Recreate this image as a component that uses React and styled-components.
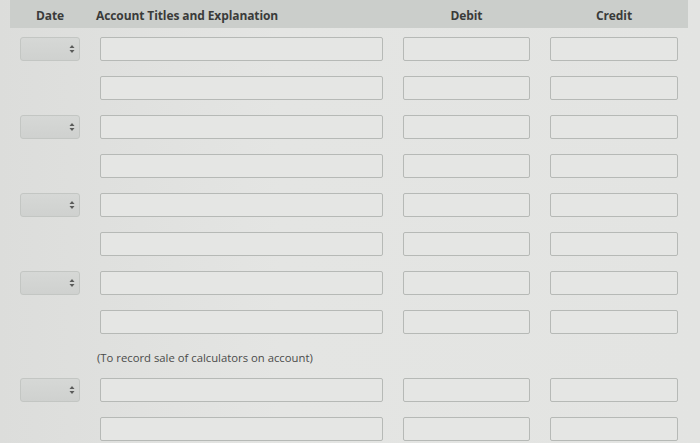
import React from 'react';
import styled, { createGlobalStyle } from 'styled-components';

const GlobalStyle = createGlobalStyle`
  html, body {
    margin: 0;
    padding: 0;
    background: #e1e2e0;
  }
  body {
    font-family: "Open Sans", "DejaVu Sans", sans-serif;
    color: #3b3c3b;
  }
`;

const Page = styled.div`
  width: 700px;
  height: 443px;
  overflow: hidden;
  background: linear-gradient(90deg, #dcdddb 0%, #e4e5e3 40%, #e3e4e2 100%);
`;

const Grid = styled.div`
  display: grid;
  grid-template-columns: 60px 283px 127px 128px;
  column-gap: 20px;
  align-items: center;
`;

const HeaderBar = styled(Grid)`
  margin-left: 10px;
  width: 678px;
  height: 28px;
  padding: 0 10px;
  box-sizing: border-box;
  background: #cbcecb;
  margin-bottom: 9px;
`;

const HeadCell = styled.div`
  font-size: 12px;
  font-weight: 700;
  color: #3a3b3a;
  text-align: ${(p) => p.$align || 'center'};
  margin-left: ${(p) => p.$shift || 0}px;
  padding-top: 2px;
  letter-spacing: -0.1px;
`;

const Body = styled.div`
  display: flex;
  flex-direction: column;
  gap: 15px;
  padding-left: 20px;
`;

const Row = styled(Grid)`
  height: 24px;
`;

const Field = styled.div`
  height: 24px;
  box-sizing: border-box;
  border: 1px solid #b6b9b6;
  border-radius: 2px;
  background: #e5e6e4;
`;

const Select = styled.div`
  height: 24px;
  box-sizing: border-box;
  border: 1px solid #c3c6c3;
  border-radius: 3px;
  background: linear-gradient(#d6d8d6, #cfd1cf);
  display: flex;
  align-items: center;
  justify-content: flex-end;
  padding-right: 4px;
`;

const Note = styled.div`
  grid-column: 2 / 3;
  height: 14px;
  font-size: 11.3px;
  line-height: 17px;
  margin-left: -3px;
  color: #4a4b4a;
  white-space: nowrap;
`;

function Arrows() {
  return (
    <svg width="6" height="10" viewBox="0 0 6 10">
      <path d="M3 1 L5.5 4 H0.5 Z" fill="#5a5b5a" />
      <path d="M3 9 L5.5 6 H0.5 Z" fill="#5a5b5a" />
    </svg>
  );
}

function EntryRow({ withDate }) {
  return (
    <Row>
      {withDate ? (
        <Select>
          <Arrows />
        </Select>
      ) : (
        <div />
      )}
      <Field />
      <Field />
      <Field />
    </Row>
  );
}

export default function App() {
  const rows = [true, false, true, false, true, false, true, false];
  return (
    <Page>
      <GlobalStyle />
      <HeaderBar>
        <HeadCell>Date</HeadCell>
        <HeadCell $align="left" $shift={-4}>Account Titles and Explanation</HeadCell>
        <HeadCell>Debit</HeadCell>
        <HeadCell>Credit</HeadCell>
      </HeaderBar>
      <Body>
        {rows.map((d, i) => (
          <EntryRow key={i} withDate={d} />
        ))}
        <Grid>
          <Note>(To record sale of calculators on account)</Note>
        </Grid>
        <EntryRow withDate />
        <EntryRow />
      </Body>
    </Page>
  );
}
